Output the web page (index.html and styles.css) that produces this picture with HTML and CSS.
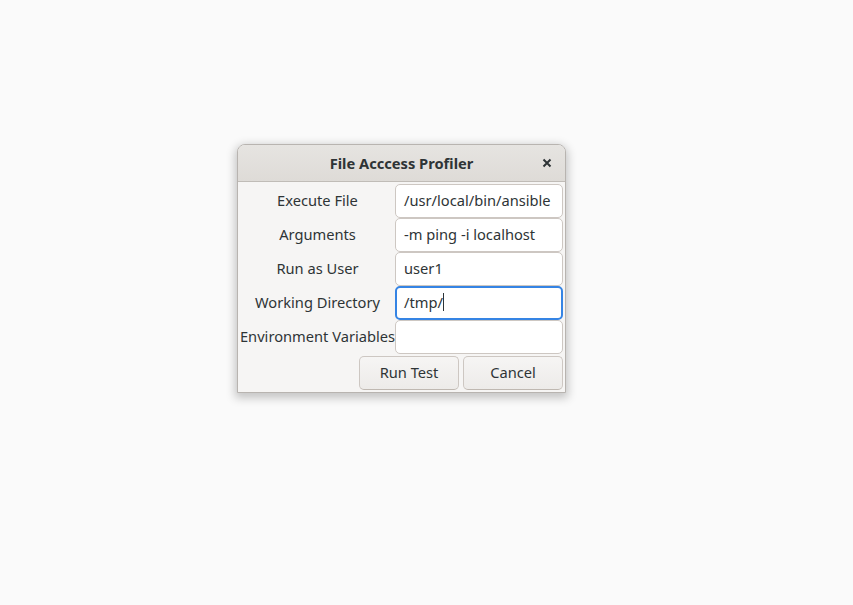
FILE: index.html
```html
<!DOCTYPE html>
<html>
<head>
<meta charset="utf-8">
<link rel="stylesheet" href="styles.css">
</head>
<body>
<div class="desktop">
  <div class="window">
    <div class="headerbar">
      <span class="title">File Acccess Profiler</span>
      <button class="close" aria-label="Close">
        <svg width="16" height="16" viewBox="0 0 16 16"><path d="M4.5 4.5 L11.5 11.5 M11.5 4.5 L4.5 11.5" stroke="#2e3436" stroke-width="2" stroke-linecap="butt" fill="none"/></svg>
      </button>
    </div>
    <div class="content">
      <div class="form">
        <label class="lbl">Execute File</label>
        <div class="entry">/usr/local/bin/ansible</div>
        <label class="lbl">Arguments</label>
        <div class="entry">-m ping -i localhost</div>
        <label class="lbl">Run as User</label>
        <div class="entry">user1</div>
        <label class="lbl">Working Directory</label>
        <div class="entry focus">/tmp/<span class="caret"></span></div>
        <label class="lbl">Environment Variables</label>
        <div class="entry"></div>
      </div>
      <div class="actions">
        <button class="btn">Run Test</button>
        <button class="btn">Cancel</button>
      </div>
    </div>
  </div>
</div>
</body>
</html>
```

FILE: styles.css
```css
html, body {
  margin: 0;
  padding: 0;
  background: #fafafa;
  width: 853px;
  height: 605px;
  overflow: hidden;
}
body {
  font-family: "Noto Sans", "Open Sans", sans-serif;
  font-size: 14.67px;
  color: #2e3436;
}
.desktop {
  position: relative;
  width: 853px;
  height: 605px;
}
.window {
  position: absolute;
  left: 237px;
  top: 144px;
  width: 327px;
  border: 1px solid #b8b4b0;
  border-radius: 8px 8px 0 0;
  background: #f6f5f4;
  box-shadow: 0 3px 10px 2px rgba(0,0,0,0.22);
}
.headerbar {
  position: relative;
  height: 36px;
  border-bottom: 1px solid #c0bcb7;
  border-radius: 7px 7px 0 0;
  background: linear-gradient(to top, #dedbd7, #e6e4e1);
  display: flex;
  align-items: center;
  justify-content: center;
}
.title {
  font-weight: bold;
  font-size: 14.67px;
  color: #2e3436;
  padding-bottom: 1px;
}
.close {
  position: absolute;
  right: 10px;
  top: 10px;
  width: 16px;
  height: 16px;
  padding: 0;
  border: 0;
  background: transparent;
  display: flex;
}
.content {
  padding: 2px 2px 2px 0;
}
.form {
  display: grid;
  grid-template-columns: 157px 168px;
  grid-auto-rows: 34px;
}
.lbl {
  display: flex;
  align-items: center;
  justify-content: center;
  white-space: nowrap;
  padding-left: 2px;
  padding-bottom: 2px;
}
.entry {
  box-sizing: border-box;
  height: 34px;
  border: 1px solid #cdc7c2;
  border-radius: 5px;
  background: #ffffff;
  display: flex;
  align-items: center;
  padding: 0 8px 2px;
  white-space: nowrap;
  overflow: hidden;
}
.entry.focus {
  border: 2px solid #3584e4;
  padding: 0 7px 2px;
}
.caret {
  display: inline-block;
  width: 1px;
  height: 18px;
  background: #2e3436;
}
.actions {
  display: flex;
  justify-content: flex-end;
  gap: 4px;
  padding-top: 2px;
}
.btn {
  box-sizing: border-box;
  width: 100px;
  height: 34px;
  font: inherit;
  color: #2e3436;
  border: 1px solid #cdc7c2;
  border-bottom-color: #bfb8b1;
  border-radius: 5px;
  background: linear-gradient(to top, #edebe9, #f6f5f4);
  padding: 0 0 2px;
}
```
